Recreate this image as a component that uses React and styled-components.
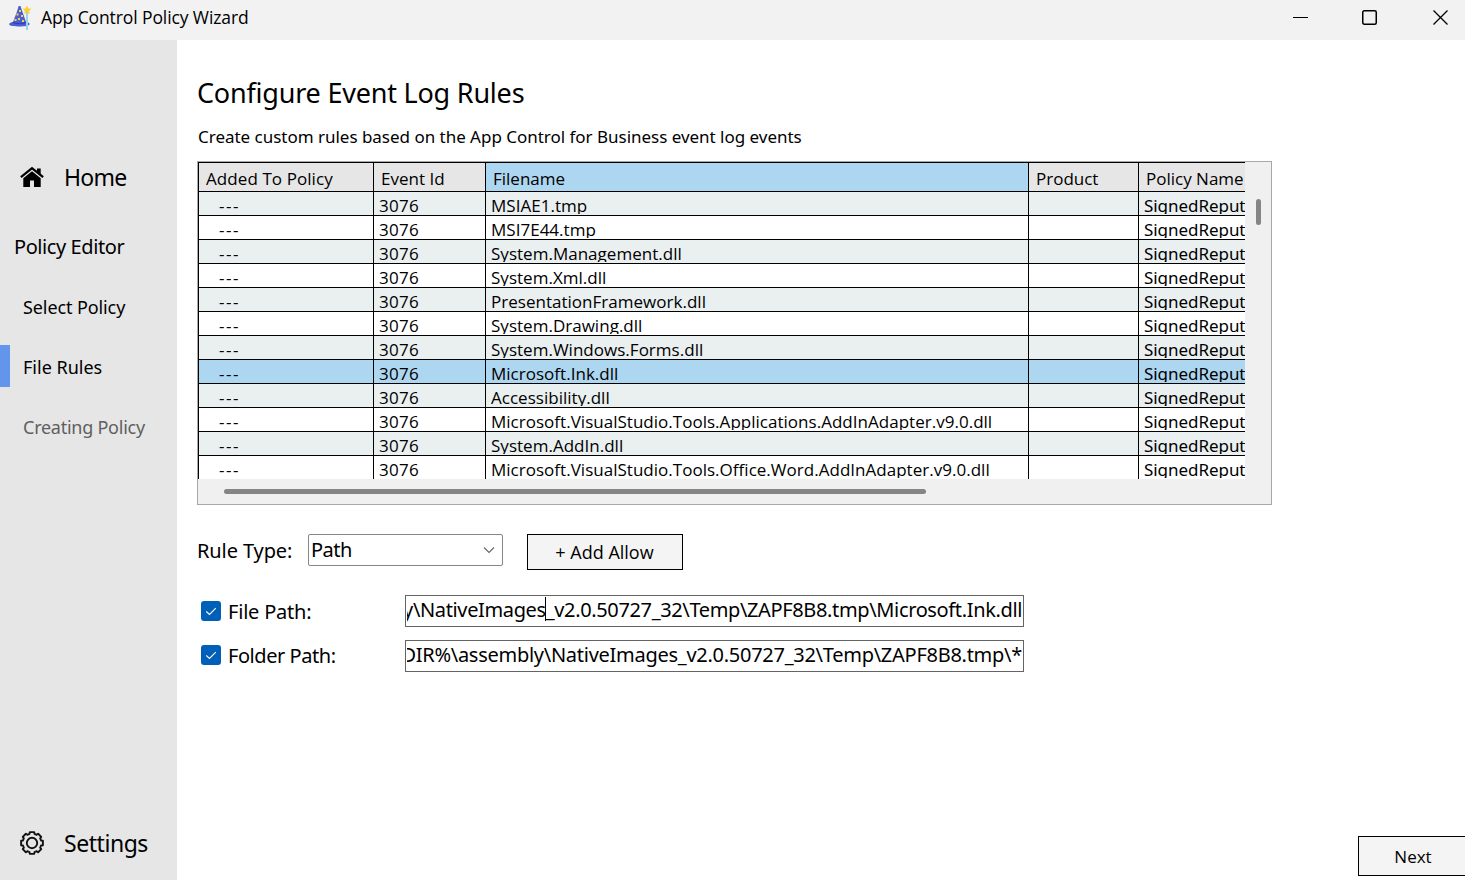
import React from 'react';
import styled, { createGlobalStyle } from 'styled-components';

const GlobalStyle = createGlobalStyle`
  * {
    box-sizing: border-box;
  }

  body {
    margin: 0;
    background: #ffffff;
    color: #000000;
    font-family: 'Noto Sans', sans-serif;
    overflow: hidden;
  }
`;

const Window = styled.div`
  display: flex;
  flex-direction: column;
  width: 1465px;
  height: 880px;
`;

const TitleBar = styled.header`
  display: flex;
  align-items: center;
  height: 40px;
  padding: 0 16px 0 8px;
  background: #f2f2f2;
`;

const AppTitle = styled.span`
  flex: 1;
  margin-left: 9px;
  padding-bottom: 6px;
  font-family: 'Open Sans', sans-serif;
  font-size: 17.5px;
  line-height: 24px;
  letter-spacing: -0.1px;
`;

const HatIcon = styled.svg`
  width: 24px;
  height: 26px;
  margin-bottom: 6px;
`;

const WindowControls = styled.div`
  display: flex;
  align-items: center;
  gap: 54px;
  margin-bottom: 5px;

  svg {
    display: block;
    width: 17px;
    height: 17px;
  }

  svg:first-child {
    margin-right: -2px;
  }
`;

const Body = styled.div`
  display: flex;
  flex: 1;
  min-height: 0;
`;

const Sidebar = styled.nav`
  display: flex;
  flex-direction: column;
  width: 177px;
  padding: 116px 0 16px;
  background: #e6e6e6;
`;

const SidebarLink = styled.a`
  display: flex;
  align-items: center;
  gap: 20px;
  height: 42px;
  padding-left: 20px;
  font-size: 23px;
  letter-spacing: ${(props) => props.$spacing};
  margin-top: ${(props) => (props.$bottom ? 'auto' : '0')};

  svg {
    width: 24px;
    height: 24px;
  }
`;

const SectionTitle = styled.div`
  height: 42px;
  margin-top: 27px;
  padding: 1px 0 0 14px;
  font-size: 20px;
  line-height: 42px;
  letter-spacing: -0.42px;
`;

const StepItem = styled.div`
  height: 42px;
  margin-top: 18px;
  padding: 1px 0 0 13px;
  border-left: 10px solid ${(props) => (props.$active ? '#6495ed' : 'transparent')};
  color: ${(props) => (props.$disabled ? '#5f5f5f' : '#000000')};
  font-size: 18px;
  line-height: 42px;
  letter-spacing: ${(props) => props.$spacing || '0'};
  white-space: nowrap;
`;

const Main = styled.main`
  display: flex;
  flex: 1;
  flex-direction: column;
  padding: 33px 0 4px 20px;
`;

const PageTitle = styled.h1`
  margin: 0;
  font-size: 27px;
  font-weight: 400;
  line-height: 40px;
  letter-spacing: -0.21px;
`;

const Subtitle = styled.p`
  margin: 12px 0 0 1px;
  font-size: 17px;
  line-height: 24px;
  letter-spacing: -0.02px;
`;

const GridBox = styled.div`
  display: grid;
  grid-template-columns: 1048px 25px;
  grid-template-rows: 317px 25px;
  width: 1075px;
  height: 344px;
  margin-top: 12px;
  border: 1px solid #a8a8a8;
  background: #f0f0f0;
`;

const GridView = styled.div`
  width: 1047px;
  overflow: hidden;
  border-top: 1px solid #000000;
  border-left: 1px solid #000000;
  background: #ffffff;
  font-family: 'Open Sans', sans-serif;
  font-size: 17px;
`;

const columns = '175px 112px 543px 110px 175px';

const HeaderRow = styled.div`
  display: grid;
  grid-template-columns: ${columns};
  height: 29px;
`;

const HeaderCell = styled.div`
  padding: 3px 0 0 7px;
  border-right: 1px solid #000000;
  border-bottom: 1px solid #000000;
  background: ${(props) => (props.$selected ? '#add6f1' : '#e6e6e6')};
  line-height: 25px;
  letter-spacing: ${(props) => props.$spacing || '0'};
  white-space: nowrap;
`;

const Row = styled.div`
  display: grid;
  grid-template-columns: ${columns};
  height: 24px;
  background: ${(props) => (props.$selected ? '#add6f1' : props.$alt ? '#eaeff0' : '#ffffff')};
`;

const Cell = styled.div`
  padding-left: ${(props) => props.$indent || 5}px;
  border-right: 1px solid #000000;
  border-bottom: 1px solid #000000;
  font-family: ${(props) => props.$font || 'inherit'};
  letter-spacing: ${(props) => props.$spacing || '0'};
`;

const CellText = styled.div`
  height: 22px;
  padding-top: 1px;
  overflow: hidden;
  line-height: 25px;
  white-space: nowrap;
`;

const VerticalTrack = styled.div`
  padding: 37px 0 0 10px;
`;

const HorizontalTrack = styled.div`
  grid-column: 1 / -1;
  padding: 10px 0 0 26px;
`;

const Thumb = styled.div`
  width: ${(props) => props.$width}px;
  height: ${(props) => props.$height}px;
  border-radius: 3px;
  background: #858585;
`;

const RuleRow = styled.div`
  display: flex;
  align-items: flex-start;
  height: 36px;
  margin-top: 29px;
`;

const Label = styled.span`
  width: ${(props) => props.$width}px;
  padding-top: ${(props) => props.$drop || 0}px;
  font-size: 20px;
  line-height: 32px;
  letter-spacing: ${(props) => props.$spacing || '-0.2px'};
  white-space: nowrap;
`;

const Select = styled.div`
  display: flex;
  align-items: center;
  justify-content: space-between;
  width: 195px;
  height: 32px;
  padding: 0 7px 0 2px;
  border: 1px solid #868686;
  border-radius: 2px;
  font-size: 20px;
  line-height: 28px;
  letter-spacing: -0.5px;

  svg {
    width: 12px;
    height: 8px;
  }
`;

const Button = styled.button`
  width: ${(props) => props.$width}px;
  height: ${(props) => props.$height}px;
  padding: 1px 0 0;
  border: 1px solid #000000;
  background: #f4f4f4;
  color: #000000;
  font-family: 'Open Sans', sans-serif;
  font-size: ${(props) => props.$size || 17}px;
`;

const AddButton = styled(Button)`
  margin-left: 24px;
  padding: 0 1px 1px 0;
`;

const NextButton = styled(Button)`
  align-self: flex-end;
  flex-shrink: 0;
  margin: auto -3px 0 0;
`;

const PathRow = styled.div`
  display: flex;
  align-items: center;
  height: 32px;
  margin-top: ${(props) => props.$top}px;
  padding-left: 4px;
`;

const CheckBox = styled.span`
  width: 20px;
  height: 20px;
  margin: ${(props) => props.$shift || 0}px 7px 0 0;
  border-radius: 3px;
  background: #005fb8;

  svg {
    display: block;
    width: 20px;
    height: 20px;
  }
`;

const PathInput = styled.div`
  width: 619px;
  height: 32px;
  padding: 0 1px;
  border: 1px solid #646464;
`;

const PathValue = styled.div`
  display: flex;
  justify-content: flex-end;
  height: 30px;
  overflow: hidden;
  font-size: 20px;
  line-height: 27px;
  letter-spacing: ${(props) => props.$spacing};
  white-space: nowrap;
`;

const Caret = styled.span`
  flex-shrink: 0;
  width: 1px;
  height: 24px;
  margin: 1px 0 0 -1px;
  background: #000000;
`;

const files = [
  'MSIAE1.tmp',
  'MSI7E44.tmp',
  'System.Management.dll',
  'System.Xml.dll',
  'PresentationFramework.dll',
  'System.Drawing.dll',
  'System.Windows.Forms.dll',
  'Microsoft.Ink.dll',
  'Accessibility.dll',
  'Microsoft.VisualStudio.Tools.Applications.AddInAdapter.v9.0.dll',
  'System.AddIn.dll',
  'Microsoft.VisualStudio.Tools.Office.Word.AddInAdapter.v9.0.dll',
];

const SELECTED = 7;

// Eight-tooth outline around the centre of a 24px box
const gearPath = () => {
  const points = [];
  for (let i = 0; i < 8; i++) {
    const base = (i * Math.PI) / 4 - Math.PI / 2;
    [[-0.27, 9.4], [-0.2, 11.1], [0.2, 11.1], [0.27, 9.4]].forEach(([offset, r]) => {
      const x = 12 + r * Math.cos(base + offset);
      const y = 12 + r * Math.sin(base + offset);
      points.push(`${x.toFixed(2)} ${y.toFixed(2)}`);
    });
  }
  return `M${points.join('L')}Z`;
};

const WizardHat = () => (
  <HatIcon viewBox="0 0 24 26">
    <path d="M1.2 20.5C1 18.8 3.6 18.2 5 18L9 7.500l1.600-5.500L12.500 2 18 18c2 .3 3.700 1 3.600 2-.4 2-5 2.400-10 2.400S1.600 22.200 1.200 20.500Z" fill="#4a5fd6" />
    <path d="M5 18.200c3 2 10 2 13 0" fill="none" stroke="#2f42b5" strokeWidth="1.200" />
    <path d="M11 6h2v2h-2zM8.500 9.500h2v2h-2zM13 11h2v2h-2zM10 14h2v2h-2zM6.500 15h2v2h-2zM14 16h2v2h-2z" fill="#f4d23c" />
    <path d="M19 8v18" stroke="#9bd3ee" strokeWidth="2" />
    <path d="M19 1.500l1.300 3 3.100.3-2.300 2.100.7 3.100L19 8.400l-2.800 1.600.7-3.100-2.300-2.100 3.100-.3Z" fill="#fbcf2b" />
  </HatIcon>
);

const HomeIcon = () => (
  <svg viewBox="0 0 24 24">
    <path d="M0.900 12.200 12 3.200l11.100 9" fill="none" stroke="#000" strokeWidth="2.300" />
    <path d="M17 3.500h3.700v6.200L17 6.700Z" />
    <path d="M3.300 13.200 12 6.200l8.700 7V22H14v-6.500h-4V22H3.300Z" />
  </svg>
);

const GearIcon = () => (
  <svg viewBox="0 0 24 24" fill="none" stroke="#111" strokeWidth="1.900" strokeLinejoin="round">
    <path d={gearPath()} />
    <circle cx="12" cy="12" r="5.200" />
  </svg>
);

const CheckIcon = () => (
  <svg viewBox="0 0 20 20" fill="none" stroke="#fff" strokeWidth="1.100">
    <path d="M5.300 10.500 8.500 13.500 14.800 7.200" />
  </svg>
);

const App = () => {
  return (
    <>
      <GlobalStyle />
      <Window>
        <TitleBar>
          <WizardHat />
          <AppTitle>App Control Policy Wizard</AppTitle>
          <WindowControls>
            <svg viewBox="0 0 17 17">
              <path d="M1 8.500h15" stroke="#000" />
            </svg>
            <svg viewBox="0 0 17 17">
              <rect x="1.750" y="1.750" width="13.500" height="13.500" rx="1.500" fill="none" stroke="#000" strokeWidth="1.500" />
            </svg>
            <svg viewBox="0 0 17 17">
              <path d="M1.500 1.500l14 14M15.500 1.500l-14 14" stroke="#000" strokeWidth="1.300" />
            </svg>
          </WindowControls>
        </TitleBar>
        <Body>
          <Sidebar>
            <SidebarLink $spacing="-0.7px">
              <HomeIcon />
              Home
            </SidebarLink>
            <SectionTitle>Policy Editor</SectionTitle>
            <StepItem $spacing="-0.1px">Select Policy</StepItem>
            <StepItem $active>File Rules</StepItem>
            <StepItem $disabled $spacing="-0.25px">Creating Policy</StepItem>
            <SidebarLink $bottom $spacing="-0.45px">
              <GearIcon />
              Settings
            </SidebarLink>
          </Sidebar>
          <Main>
            <PageTitle>Configure Event Log Rules</PageTitle>
            <Subtitle>Create custom rules based on the App Control for Business event log events</Subtitle>
            <GridBox>
              <GridView>
                <HeaderRow>
                  <HeaderCell $spacing="0.08px">Added To Policy</HeaderCell>
                  <HeaderCell>Event Id</HeaderCell>
                  <HeaderCell $selected>Filename</HeaderCell>
                  <HeaderCell>Product</HeaderCell>
                  <HeaderCell>Policy Name</HeaderCell>
                </HeaderRow>
                {files.map((file, i) => (
                  <Row key={file} $alt={i % 2 === 0} $selected={i === SELECTED}>
                    <Cell $indent={20} $spacing="1.5px"><CellText>---</CellText></Cell>
                    <Cell $spacing="0.3px"><CellText>3076</CellText></Cell>
                    <Cell $spacing="0.02px"><CellText>{file}</CellText></Cell>
                    <Cell />
                    <Cell $font="'Noto Sans', sans-serif" $spacing="-0.05px"><CellText>SignedReput</CellText></Cell>
                  </Row>
                ))}
              </GridView>
              <VerticalTrack>
                <Thumb $width={5} $height={26} />
              </VerticalTrack>
              <HorizontalTrack>
                <Thumb $width={702} $height={5} />
              </HorizontalTrack>
            </GridBox>
            <RuleRow>
              <Label $width={111} $drop={1} $spacing="-0.1px">Rule Type:</Label>
              <Select>
                Path
                <svg viewBox="0 0 12 8">
                  <path d="M1 1.500l5 5 5-5" fill="none" stroke="#666" strokeWidth="1.100" />
                </svg>
              </Select>
              <AddButton $width={156} $height={36} $size={18}>+ Add Allow</AddButton>
            </RuleRow>
            <PathRow $top={25}>
              <CheckBox><CheckIcon /></CheckBox>
              <Label $width={177} $drop={1}>File Path:</Label>
              <PathInput>
                <PathValue $spacing="-0.36px">
                  y\NativeImages<Caret />_v2.0.50727_32\Temp\ZAPF8B8.tmp\Microsoft.Ink.dll
                </PathValue>
              </PathInput>
            </PathRow>
            <PathRow $top={13}>
              <CheckBox $shift={-2}><CheckIcon /></CheckBox>
              <Label $width={177} $spacing="-0.45px">Folder Path:</Label>
              <PathInput>
                <PathValue $spacing="-0.27px">DIR%\assembly\NativeImages_v2.0.50727_32\Temp\ZAPF8B8.tmp\*</PathValue>
              </PathInput>
            </PathRow>
            <NextButton $width={110} $height={40}>Next</NextButton>
          </Main>
        </Body>
      </Window>
    </>
  );
};

export default App;
